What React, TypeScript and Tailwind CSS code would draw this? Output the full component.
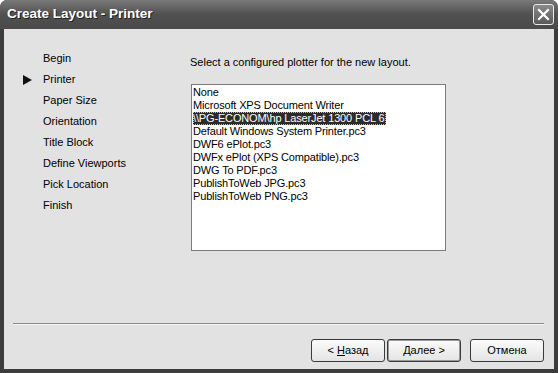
import React from "react";

const navItems = [
  "Begin",
  "Printer",
  "Paper Size",
  "Orientation",
  "Title Block",
  "Define Viewports",
  "Pick Location",
  "Finish",
];

const plotters = [
  "None",
  "Microsoft XPS Document Writer",
  "\\\\PG-ECONOM\\hp LaserJet 1300 PCL 6",
  "Default Windows System Printer.pc3",
  "DWF6 ePlot.pc3",
  "DWFx ePlot (XPS Compatible).pc3",
  "DWG To PDF.pc3",
  "PublishToWeb JPG.pc3",
  "PublishToWeb PNG.pc3",
];

function Btn({ children, def }: { children: React.ReactNode; def?: boolean }) {
  return (
    <div
      className={
        "w-[74px] h-[23px] rounded-[3px] border border-[#3a3a3a] bg-gradient-to-b from-[#fbfbfb] to-[#e4e4e4] flex items-center justify-center text-[11px] text-black " +
        (def ? "shadow-[inset_0_0_0_1px_#9a9a9a]" : "")
      }
    >
      {children}
    </div>
  );
}

export default function App() {
  return (
    <div
      className="w-[558px] h-[373px] bg-[#3c3c3c] flex flex-col overflow-hidden rounded-t-[7px]"
      style={{ fontFamily: '"Liberation Sans", Arial, sans-serif' }}
    >
      {/* Title bar */}
      <div className="h-[29px] shrink-0 bg-gradient-to-b from-[#7a7a7a] via-[#505050] to-[#4a4a4a] flex items-center justify-between pl-[7px] pr-[4px] rounded-t-[7px]">
        <span className="text-white font-bold text-[13.5px] [text-shadow:1px_1px_0_#222]">
          Create Layout - Printer
        </span>
        <div className="w-[21px] h-[21px] rounded-[3px] border border-[#e8e8e8] bg-gradient-to-b from-[#8a8a8a] to-[#5a5a5a] flex items-center justify-center">
          <svg width="13" height="13" viewBox="0 0 13 13">
            <path d="M2 2 L11 11 M11 2 L2 11" stroke="white" strokeWidth="2.2" strokeLinecap="square" />
          </svg>
        </div>
      </div>

      {/* Body */}
      <div className="flex-1 mx-[4px] mb-[4px] bg-[#e2e2e2] flex flex-col">
        <div className="flex flex-1">
          {/* Nav */}
          <div className="w-[186px] pt-[19px] flex flex-col">
            {navItems.map((n, i) => (
              <div key={n} className="h-[21px] flex items-center text-[11px] text-black">
                <div className="w-[39px] pl-[19px] flex items-center">
                  {i === 1 && (
                    <svg width="9" height="10" viewBox="0 0 9 10">
                      <path d="M0 0 L9 5 L0 10 Z" fill="#111" />
                    </svg>
                  )}
                </div>
                <span>{n}</span>
              </div>
            ))}
          </div>
          {/* Right content */}
          <div className="pt-[27px] flex flex-col">
            <div className="h-[13px] leading-[13px] text-[11px] text-black">
              Select a configured plotter for the new layout.
            </div>
            <div className="mt-[15px] ml-[1px] w-[255px] h-[167px] bg-white border border-[#7c7c7c] pt-[1px] pl-[1px]">
              {plotters.map((p, i) => (
                <div key={i} className="h-[13px] leading-[13px] text-[11px] tracking-[-0.15px]">
                  <span
                    className={
                      i === 2
                        ? "bg-[#2b2b2b] text-white outline outline-1 outline-dotted outline-[#bbb] -outline-offset-1 pr-[2px] inline-block h-[13px]"
                        : "text-black"
                    }
                  >
                    {p}
                  </span>
                </div>
              ))}
            </div>
          </div>
        </div>

        {/* Separator */}
        <div className="ml-[9px] mr-[10px] h-[1px] bg-[#8a8a8a]" />
        <div className="ml-[9px] mr-[10px] h-[1px] bg-[#f4f4f4]" />

        {/* Buttons */}
        <div className="flex justify-end items-center pt-[14px] pb-[7px] pr-[10px]">
          <Btn>
            &lt; <span className="underline ml-[3px]">Н</span>азад
          </Btn>
          <div className="w-[2px]" />
          <Btn def>
            <span className="underline">Д</span>алее &gt;
          </Btn>
          <div className="w-[9px]" />
          <Btn>Отмена</Btn>
        </div>
      </div>
    </div>
  );
}
